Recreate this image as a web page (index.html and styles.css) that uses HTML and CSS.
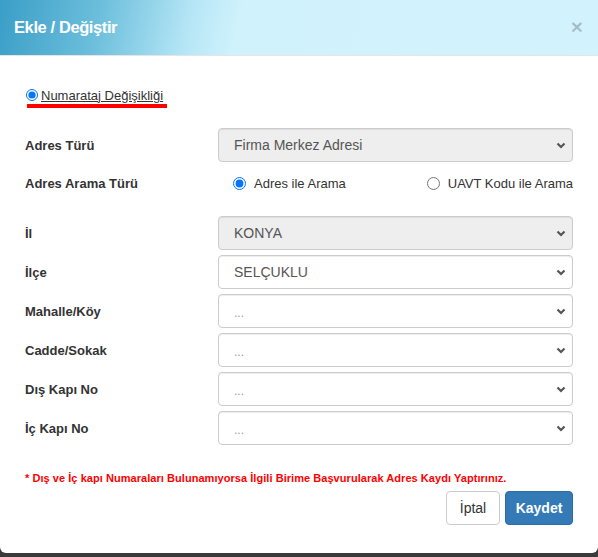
FILE: index.html
```html
<!DOCTYPE html>
<html lang="tr">
<head>
<meta charset="utf-8">
<title>Ekle / Değiştir</title>
<link rel="stylesheet" href="styles.css">
</head>
<body>
<div class="modal">
  <div class="modal-header">
    <h4 class="modal-title">Ekle / Değiştir</h4>
    <span class="close">×</span>
  </div>
  <div class="modal-body">
    <div class="numarataj">
      <label class="num-label"><input type="radio" checked><span class="num-text">Numarataj Değişikliği</span></label>
    </div>
    <div class="form">
      <div class="row">
        <div class="label">Adres Türü</div>
        <div class="select disabled"><span>Firma Merkez Adresi</span><svg class="chev" width="10" height="7" viewBox="0 0 10 7"><path d="M1.5 1.5 L5 5 L8.5 1.5" fill="none" stroke="#555" stroke-width="2.2"/></svg></div>
      </div>
      <div class="row radio-row">
        <div class="label">Adres Arama Türü</div>
        <div class="radios">
          <label class="opt"><input type="radio" name="a" checked>Adres ile Arama</label>
          <label class="opt"><input type="radio" name="a">UAVT Kodu ile Arama</label>
        </div>
      </div>
      <div class="row first-block">
        <div class="label">İl</div>
        <div class="select disabled"><span>KONYA</span><svg class="chev" width="10" height="7" viewBox="0 0 10 7"><path d="M1.5 1.5 L5 5 L8.5 1.5" fill="none" stroke="#555" stroke-width="2.2"/></svg></div>
      </div>
      <div class="row">
        <div class="label">İlçe</div>
        <div class="select"><span>SELÇUKLU</span><svg class="chev" width="10" height="7" viewBox="0 0 10 7"><path d="M1.5 1.5 L5 5 L8.5 1.5" fill="none" stroke="#555" stroke-width="2.2"/></svg></div>
      </div>
      <div class="row">
        <div class="label">Mahalle/Köy</div>
        <div class="select"><span class="dots">...</span><svg class="chev" width="10" height="7" viewBox="0 0 10 7"><path d="M1.5 1.5 L5 5 L8.5 1.5" fill="none" stroke="#555" stroke-width="2.2"/></svg></div>
      </div>
      <div class="row">
        <div class="label">Cadde/Sokak</div>
        <div class="select"><span class="dots">...</span><svg class="chev" width="10" height="7" viewBox="0 0 10 7"><path d="M1.5 1.5 L5 5 L8.5 1.5" fill="none" stroke="#555" stroke-width="2.2"/></svg></div>
      </div>
      <div class="row">
        <div class="label">Dış Kapı No</div>
        <div class="select"><span class="dots">...</span><svg class="chev" width="10" height="7" viewBox="0 0 10 7"><path d="M1.5 1.5 L5 5 L8.5 1.5" fill="none" stroke="#555" stroke-width="2.2"/></svg></div>
      </div>
      <div class="row">
        <div class="label">İç Kapı No</div>
        <div class="select"><span class="dots">...</span><svg class="chev" width="10" height="7" viewBox="0 0 10 7"><path d="M1.5 1.5 L5 5 L8.5 1.5" fill="none" stroke="#555" stroke-width="2.2"/></svg></div>
      </div>
    </div>
    <p class="note">* Dış ve İç kapı Numaraları Bulunamıyorsa İlgili Birime Başvurularak Adres Kaydı Yaptırınız.</p>
    <div class="footer">
      <button class="btn btn-default">İptal</button>
      <button class="btn btn-primary">Kaydet</button>
    </div>
  </div>
</div>
</body>
</html>
```
FILE: styles.css
```css
html, body {
  margin: 0;
  padding: 0;
}
body {
  background: #3a3a3a;
  font-family: "Liberation Sans", Arial, sans-serif;
  color: #333;
  width: 598px;
  height: 557px;
  overflow: hidden;
}
.modal {
  width: 598px;
  height: 553px;
  background: #fff;
  border-radius: 0 0 6px 6px;
  overflow: hidden;
}
.modal-header {
  height: 56px;
  box-sizing: border-box;
  border-bottom: 1px solid #e5e5e5;
  padding: 0 15px 0 14px;
  display: flex;
  align-items: center;
  justify-content: space-between;
  background: linear-gradient(102deg, #3a9ec7 0%, #6dbfdc 17%, #b6e6f6 32%, #d0f2fc 40%, #d2f3fd 100%);
}
.modal-title {
  margin: 0;
  color: #fff;
  font-size: 16.5px;
  font-weight: bold;
  letter-spacing: -0.4px;
}
.close {
  font-size: 21px;
  font-weight: bold;
  color: rgba(0, 0, 0, 0.22);
  line-height: 1;
  margin-top: -2px;
}
.modal-body {
  padding: 31px 25px 0 25px;
}
.numarataj {
  height: 18px;
}
.num-label {
  display: inline-flex;
  align-items: center;
  font-size: 13px;
  position: relative;
  padding-bottom: 2px;
}
.num-label::after {
  content: "";
  position: absolute;
  left: 2px;
  right: -4px;
  bottom: -3px;
  height: 4px;
  background: #f00;
}
.num-label input {
  margin: 0 3px 0 1px;
  width: 12px;
  height: 12px;
}
.num-text {
  text-decoration: underline;
  color: #333;
}
.form {
  margin-top: 23px;
  display: flex;
  flex-direction: column;
  gap: 5px;
}
.row {
  display: grid;
  grid-template-columns: 193px 355px;
  align-items: center;
  min-height: 34px;
}
.label {
  font-size: 13px;
  font-weight: bold;
  color: #333;
}
.select {
  height: 34px;
  box-sizing: border-box;
  border: 1px solid #ccc;
  border-radius: 4px;
  background: #fff;
  display: flex;
  align-items: center;
  justify-content: space-between;
  padding: 0 6px 0 15px;
  font-size: 14px;
  color: #555;
  box-shadow: inset 0 1px 1px rgba(0, 0, 0, 0.075);
}
.select.disabled {
  background: #eee;
}
.dots {
  color: #999;
  font-size: 12px;
  padding-top: 4px;
}
.chev {
  display: block;
}
.radio-row {
  min-height: 32px;
}
.radios {
  display: flex;
  justify-content: space-between;
  padding-left: 15px;
  font-size: 13px;
  color: #333;
}
.opt {
  display: inline-flex;
  align-items: center;
}
.opt input {
  margin: 0 8px 0 0;
  width: 13px;
  height: 13px;
}
.first-block {
  margin-top: 12px;
}
.note {
  margin: 27px 0 0 0;
  font-size: 11px;
  font-weight: bold;
  color: #f00;
  letter-spacing: 0.05px;
}
.footer {
  margin-top: 7px;
  display: flex;
  justify-content: flex-end;
  gap: 5px;
}
.btn {
  height: 34px;
  box-sizing: border-box;
  border-radius: 4px;
  font-family: "Liberation Sans", Arial, sans-serif;
  font-size: 14px;
  padding: 0 8px;
  border: 1px solid #ccc;
  cursor: pointer;
}
.btn-default {
  background: #fff;
  color: #333;
  width: 54px;
}
.btn-primary {
  background: #337ab7;
  border-color: #2e6da4;
  color: #fff;
  font-weight: bold;
  width: 68px;
}
```
